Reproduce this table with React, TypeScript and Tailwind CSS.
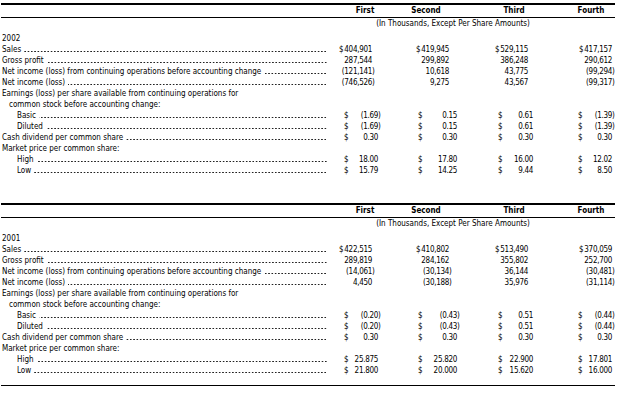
import React from 'react';

type Kind = 'money' | 'ps';

type Row = {
  label: string;
  indent?: 0 | 1 | 2;
  dots?: boolean;
  kind?: Kind;
  values?: string[];
};

type Section = {
  year: string;
  rows: Row[];
};

const sections: Section[] = [
  {
    year: '2002',
    rows: [
      { label: 'Sales', dots: true, kind: 'money', values: ['$|404,901', '$|419,945', '$|529,115', '$|417,157'] },
      { label: 'Gross profit', dots: true, kind: 'money', values: ['|287,544', '|299,892', '|386,248', '|290,612'] },
      { label: 'Net income (loss) from continuing operations before accounting change', dots: true, kind: 'money', values: ['|(121,141)', '|10,618', '|43,775', '|(99,294)'] },
      { label: 'Net income (loss)', dots: true, kind: 'money', values: ['|(746,526)', '|9,275', '|43,567', '|(99,317)'] },
      { label: 'Earnings (loss) per share available from continuing operations for' },
      { label: 'common stock before accounting change:', indent: 1 },
      { label: 'Basic', indent: 2, dots: true, kind: 'ps', values: ['$|(1.69)', '$|0.15', '$|0.61', '$|(1.39)'] },
      { label: 'Diluted', indent: 2, dots: true, kind: 'ps', values: ['$|(1.69)', '$|0.15', '$|0.61', '$|(1.39)'] },
      { label: 'Cash dividend per common share', dots: true, kind: 'ps', values: ['$|0.30', '$|0.30', '$|0.30', '$|0.30'] },
      { label: 'Market price per common share:' },
      { label: 'High', indent: 2, dots: true, kind: 'ps', values: ['$|18.00', '$|17.80', '$|16.00', '$|12.02'] },
      { label: 'Low', indent: 2, dots: true, kind: 'ps', values: ['$|15.79', '$|14.25', '$|9.44', '$|8.50'] },
    ],
  },
  {
    year: '2001',
    rows: [
      { label: 'Sales', dots: true, kind: 'money', values: ['$|422,515', '$|410,802', '$|513,490', '$|370,059'] },
      { label: 'Gross profit', dots: true, kind: 'money', values: ['|289,819', '|284,162', '|355,802', '|252,700'] },
      { label: 'Net income (loss) from continuing operations before accounting change', dots: true, kind: 'money', values: ['|(14,061)', '|(30,134)', '|36,144', '|(30,481)'] },
      { label: 'Net income (loss)', dots: true, kind: 'money', values: ['|4,450', '|(30,188)', '|35,976', '|(31,114)'] },
      { label: 'Earnings (loss) per share available from continuing operations for' },
      { label: 'common stock before accounting change:', indent: 1 },
      { label: 'Basic', indent: 2, dots: true, kind: 'ps', values: ['$|(0.20)', '$|(0.43)', '$|0.51', '$|(0.44)'] },
      { label: 'Diluted', indent: 2, dots: true, kind: 'ps', values: ['$|(0.20)', '$|(0.43)', '$|0.51', '$|(0.44)'] },
      { label: 'Cash dividend per common share', dots: true, kind: 'ps', values: ['$|0.30', '$|0.30', '$|0.30', '$|0.30'] },
      { label: 'Market price per common share:' },
      { label: 'High', indent: 2, dots: true, kind: 'ps', values: ['$|25.875', '$|25.820', '$|22.900', '$|17.801'] },
      { label: 'Low', indent: 2, dots: true, kind: 'ps', values: ['$|21.800', '$|20.000', '$|15.620', '$|16.000'] },
    ],
  },
];

// cell widths / gaps per column, written out in full for tailwind
const cellClass: Record<Kind, string[]> = {
  money: ['w-[32px]', 'ml-[42px] w-[35px]', 'ml-[45px] w-[34px]', 'ml-[46px] w-[38px]'],
  ps: ['w-[38px]', 'ml-[36px] w-[43px]', 'ml-[37px] w-[39px]', 'ml-[41px] w-[38px]'],
};

const indentClass = ['pl-[2px]', 'pl-[9px]', 'pl-[17px]'];

function Cell({ value, kind, className }: { value: string; kind: Kind; className: string }) {
  const [dollar, raw] = value.split('|');
  const neg = raw.startsWith('(');
  const num = neg ? raw.slice(0, -1) : raw;

  if (kind === 'money') {
    // dollar sign sits right against the figure on the money rows
    return (
      <div className={`flex justify-end ${className}`}>
        <span className="whitespace-nowrap tracking-[-0.3px]">
          {dollar && <span className="mr-[1px]">{dollar}</span>}
          {num}
        </span>
        <span className="w-[4px] shrink-0">{neg ? ')' : ''}</span>
      </div>
    );
  }

  return (
    <div className={`flex ${className}`}>
      <div className="flex flex-1 justify-between">
        <span>{dollar}</span>
        <span className="whitespace-nowrap tracking-[-0.3px]">{num}</span>
      </div>
      <span className="w-[4px] shrink-0">{neg ? ')' : ''}</span>
    </div>
  );
}

function DataRow({ row }: { row: Row }) {
  const kind = row.kind ?? 'money';
  return (
    <div className="flex h-[11px] items-center leading-[11px]">
      <div className={`flex w-[344px] shrink-0 self-stretch items-center pr-[17px] ${indentClass[row.indent ?? 0]}`}>
        <span className="shrink-0 whitespace-nowrap">{row.label}</span>
        {row.dots && (
          <div className="ml-[3px] flex-1 self-stretch bg-[radial-gradient(circle,#222_0.55px,transparent_0.95px)] bg-[length:3.3px_3px] bg-[position:right_0_bottom_2px] bg-repeat-x" />
        )}
      </div>
      {row.values && row.values.map((v, i) => <Cell key={i} value={v} kind={kind} className={cellClass[kind][i]} />)}
    </div>
  );
}

function QuarterSection({ section, last }: { section: Section; last?: boolean }) {
  return (
    <div className={last ? '' : 'pb-[24px]'}>
      <div className="pt-[3px]">
        <div className="ml-px h-[2px] w-[614px] bg-black" />
        {/* column headers */}
        <div className="flex h-[12px] items-center font-bold leading-[12px]">
          <div className="ml-[335px] w-[60px] text-center">First</div>
          <div className="ml-[1px] w-[60px] text-center">Second</div>
          <div className="ml-[33px] w-[50px] text-center">Third</div>
          <div className="ml-[27px] w-[50px] text-center">Fourth</div>
        </div>
        <div className="ml-px h-px w-[614px] bg-black" />
        <div className="flex h-[12px] items-center leading-[12px]">
          <div className="ml-[353px] w-[200px] text-center">(In Thousands, Except Per Share Amounts)</div>
        </div>
      </div>
      <div className="mt-[3px] flex h-[11px] items-center pl-[2px] leading-[11px]">{section.year}</div>
      {section.rows.map((r, i) => (
        <DataRow key={i} row={r} />
      ))}
      {last && <div className="ml-px mt-[9px] h-px w-[614px] bg-black" />}
    </div>
  );
}

export default function App() {
  return (
    <div
      className="h-[402px] w-[618px] overflow-hidden bg-white text-[8px] text-black"
      style={{ fontFamily: '"Liberation Sans Narrow", "DejaVu Sans Condensed", "Roboto Condensed", "Liberation Sans", sans-serif' }}
    >
      {sections.map((s, i) => (
        <QuarterSection key={s.year} section={s} last={i === sections.length - 1} />
      ))}
    </div>
  );
}
